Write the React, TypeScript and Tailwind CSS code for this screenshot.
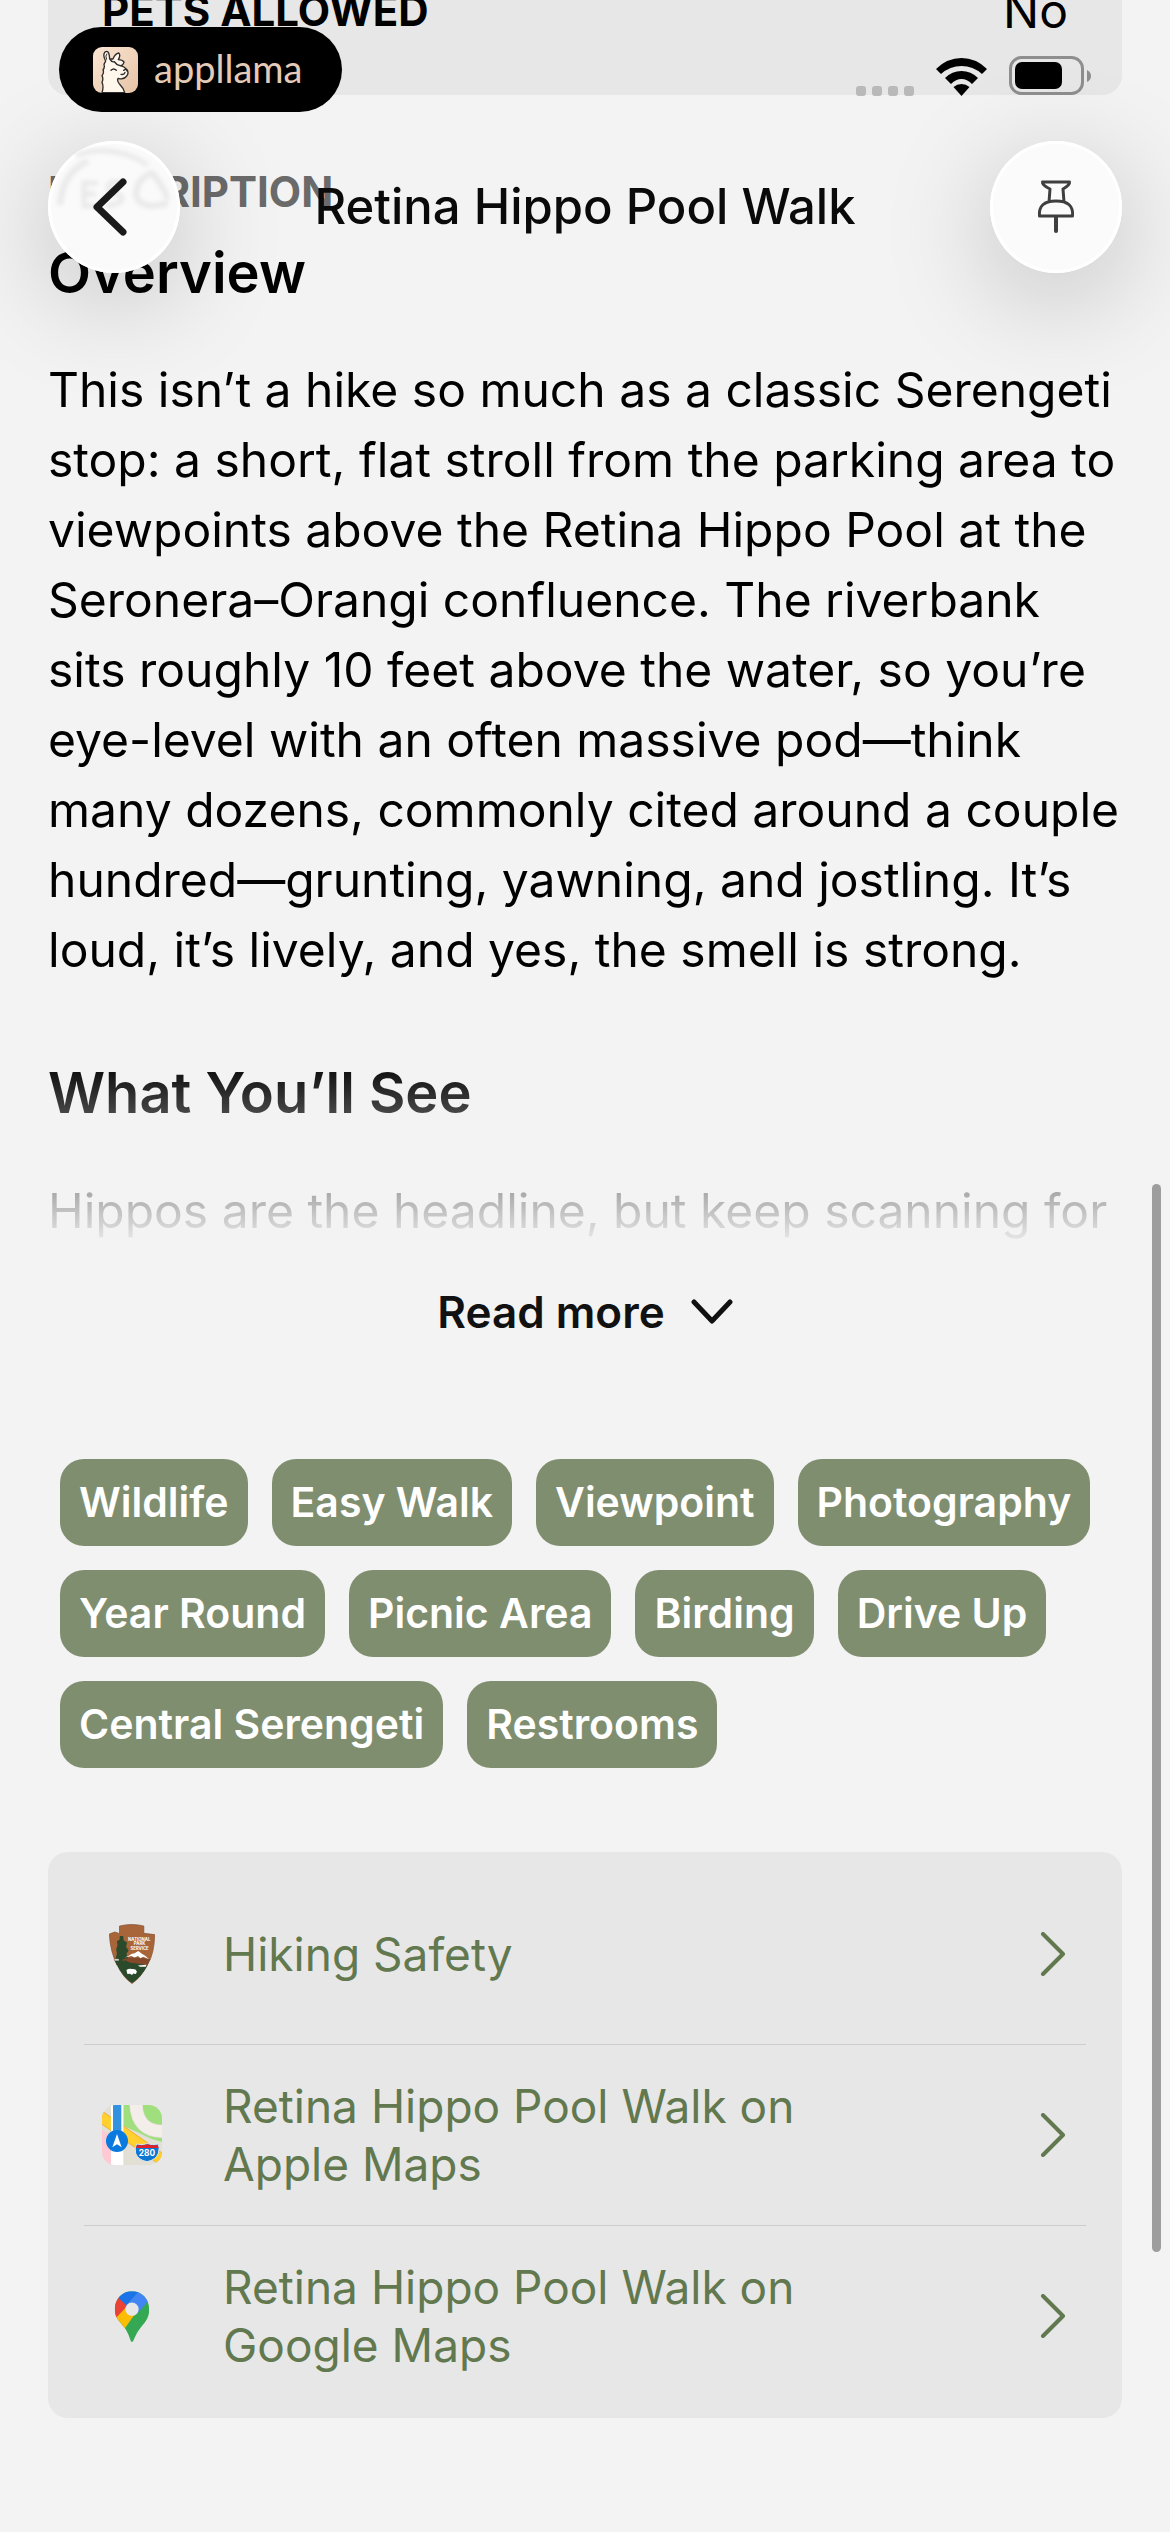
import React from "react";

const tags = [
  "Wildlife",
  "Easy Walk",
  "Viewpoint",
  "Photography",
  "Year Round",
  "Picnic Area",
  "Birding",
  "Drive Up",
  "Central Serengeti",
  "Restrooms",
];

function ParkServiceIcon() {
  return (
    <svg viewBox="86 100 140 182" className="h-[60px] w-[46px]" aria-hidden="true">
      <path
        d="M118 106 Q155 96 192 106 L192 128 L225 132 Q224 190 204 222 Q184 262 156 281 Q128 262 110 222 Q90 185 87 130 L104 124 L118 129Z"
        fill="#a9653a"
        stroke="#7d4a2a"
        strokeWidth="2"
      />
      <path d="M100 206 Q150 198 212 206 L203 226 L110 226Z" fill="#84492a" />
      <path d="M104 208 L124 203 L120 216 L136 210 L150 218 L172 220 L203 226 Q184 262 156 279 Q128 262 108 220Z" fill="#2b4a2b" />
      <path d="M119 136 L129 136 L131 150 L141 156 L138 170 L146 180 L139 190 L144 204 L128 206 L126 222 L119 222 L119 206 L106 204 L110 190 L108 176 L112 164 L110 152 L118 148Z" fill="#2b4a2b" />
      <path d="M134 202 L146 196 L156 190 L164 189 L175 182 L186 190 L196 196 L208 207 L190 199 L182 204 L174 197 L164 202 L154 197Z" fill="#fff" />
      <path d="M102 207 H116 V211 H104Z M174 226 L200 224 L198 230 H180Z" fill="#fff" />
      <path d="M139 240 Q148 233 156 237 Q168 236 171 244 L168 252 L160 250 L156 255 L150 251 L142 252Z" fill="#fff" />
      <g fill="#fff" fontFamily="Inter, sans-serif" fontWeight="700" fontSize="13" textAnchor="middle">
        <text x="178" y="151">NATIONAL</text>
        <text x="179" y="165">PARK</text>
        <text x="179" y="178">SERVICE</text>
      </g>
    </svg>
  );
}

function AppleMapsIcon() {
  return (
    <svg viewBox="66 75 180 180" className="h-[60px] w-[60px]" aria-hidden="true">
      <clipPath id="maps-tile">
        <rect x="66" y="75" width="180" height="180" rx="40" />
      </clipPath>
      <g clipPath="url(#maps-tile)">
        <rect x="66" y="75" width="180" height="180" fill="#e2dfd5" />
        <path d="M130 75H246V185Q215 180 180 160L130 138Z" fill="#9fdf7d" />
        <path d="M168 70Q170 154 250 154" fill="none" stroke="#e2ddd8" strokeWidth="40" />
        <path d="M168 70Q170 154 250 154" fill="none" stroke="#f4eeea" strokeWidth="36" />
        <path d="M66 150L100 170V255H66Z" fill="#ffc9d4" />
        <path d="M56 106L256 246" fill="none" stroke="#f2ae2c" strokeWidth="35" />
        <path d="M56 106L256 246" fill="none" stroke="#ffd02f" strokeWidth="30" />
        <rect x="93" y="75" width="37" height="180" fill="#fff" />
        <rect x="99" y="75" width="25" height="90" fill="#3392e0" />
        <circle cx="111" cy="183" r="33" fill="#0a7adf" />
        <path d="M111 162L125 202L111 193L97 202Z" fill="#fff" />
        <path d="M170 192Q186 196 202 191Q218 196 234 192Q240 204 235 220Q228 240 201 245Q174 240 167 220Q163 204 170 192Z" fill="#0d77d2" stroke="#d9e6ee" strokeWidth="3" />
        <path d="M171 194Q186 198 202 193Q218 198 233 194L236 204H168Z" fill="#e0202b" />
        <text x="201" y="228" fill="#fff" fontFamily="Inter, sans-serif" fontWeight="700" fontSize="25" textAnchor="middle">280</text>
      </g>
    </svg>
  );
}

function GoogleMapsIcon() {
  return (
    <svg viewBox="104 92 108 154" className="h-[51px] w-9" aria-hidden="true">
      <clipPath id="pin-shape">
        <path d="M158 93C187 93 210 116 210 147C210 178 194 189 180 208C168 225 166 235 161 244Q158 248 155 244C150 232 148 222 138 206C122 184 106 175 106 147C106 116 129 93 158 93Z" />
      </clipPath>
      <g clipPath="url(#pin-shape)">
        <rect x="100" y="90" width="116" height="160" fill="#34a853" />
        <path d="M100 180L158 112L182 140L134 208L100 220Z" fill="#fbbc04" />
        <path d="M100 95L118 112L146 135L110 173H96Z" fill="#ea4335" />
        <path d="M117 113L142 136L182 90H130Z" fill="#1a73e8" />
        <path d="M176 95L142 136L172 162L207 122L200 90Z" fill="#4285f4" />
      </g>
      <circle cx="158" cy="147" r="20" fill="#e7e7e7" />
    </svg>
  );
}

function LlamaIcon() {
  return (
    <svg viewBox="0 0 135 138" className="h-[46px] w-[45px]" aria-hidden="true">
      <defs>
        <linearGradient id="llama-bg" x1="0" y1="0" x2="1" y2="1">
          <stop offset="0" stopColor="#fbe6d3" />
          <stop offset="1" stopColor="#e6c3a6" />
        </linearGradient>
      </defs>
      <rect width="135" height="138" rx="27" fill="url(#llama-bg)" />
      <path
        d="M27 137Q33 118 27 106Q32 96 27 86Q34 78 30 68Q36 62 33 52Q36 46 38 42Q28 24 36 15Q46 8 49 26L50 36L60 36Q66 20 77 18Q84 24 76 38Q88 38 93 45Q90 56 82 56Q94 58 102 68Q108 78 102 86Q92 100 76 94Q70 100 80 112Q92 124 95 137Z"
        fill="#fff6ec"
        stroke="#2b2b2b"
        strokeWidth="4"
        strokeLinejoin="round"
      />
      <path d="M52 38Q56 46 64 44Q70 54 82 56M54 70Q62 62 70 70M92 70L98 66L102 72M96 76Q94 84 84 82" fill="none" stroke="#2b2b2b" strokeWidth="4" strokeLinecap="round" />
      <path d="M41 38Q36 26 42 20" fill="none" stroke="#2b2b2b" strokeWidth="3" />
    </svg>
  );
}

function StatusIcons() {
  return (
    <div className="flex items-end" aria-label="Status">
      <div className="flex gap-1.5">
        {[0, 1, 2, 3].map((i) => (
          <span key={i} className="size-2.5 rounded-[3px] bg-[#b9b9b9]" />
        ))}
      </div>
      <svg viewBox="0 0 51 38" className="ml-[22px] h-[38px] w-[51px]" aria-hidden="true">
        <path d="M0 11Q11 0 25.500 0Q40 0 51 11L46 16Q37 8 25.500 8Q14 8 5 16Z" />
        <path d="M9 20Q16 13 25.500 13Q35 13 42 20L36 26Q31 21 25.500 21Q20 21 15 26Z" />
        <path d="M17.500 29Q21 26 25.500 26Q30 26 33.500 29L25.500 38Z" />
      </svg>
      <svg viewBox="0 0 83 40" className="ml-[22px] h-10 w-[83px]" aria-hidden="true">
        <rect x="1.500" y="1.500" width="72" height="36" rx="11" fill="none" stroke="#8e8e8e" strokeWidth="3" />
        <rect x="6" y="6" width="47" height="27" rx="7" />
        <path d="M78 14Q82 16 82 20Q82 24 78 26Z" fill="#8e8e8e" />
      </svg>
    </div>
  );
}

/* Refraction of the label behind the round glass button. */
function BackGlass() {
  return (
    <svg viewBox="0 0 132 132" className="absolute inset-0 size-full rounded-full" aria-hidden="true">
      <defs>
        <filter id="glass-soft">
          <feGaussianBlur stdDeviation="2" />
        </filter>
      </defs>
      <g filter="url(#glass-soft)" fill="none" stroke="#e9e9e9">
        <path d="M28 14Q66 2 100 24" strokeWidth="5" />
        <path d="M12 64Q14 32 40 20" strokeWidth="6" />
        <path d="M50 42H36V65H52M36 53H48" strokeWidth="5" />
        <path d="M76 42Q60 38 60 47Q62 53 72 54Q80 62 58 65" strokeWidth="5" />
        <path d="M120 62Q92 70 88 54Q88 38 104 32Q112 40 120 58" strokeWidth="6" />
      </g>
    </svg>
  );
}

function LinkRow({ icon, label }: { icon: React.ReactNode; label: string }) {
  return (
    <li>
      <a href="#" className="flex h-[180px] items-center">
        <span className="flex w-24 shrink-0 justify-center">{icon}</span>
        <span className="ml-[43px] max-w-[640px] text-[46px] leading-[58px] text-[#62784e]">{label}</span>
        <svg viewBox="0 0 26 44" className="mr-5 ml-auto h-11 w-[26px]" fill="none" stroke="#62784e" strokeWidth="4" strokeLinecap="round" strokeLinejoin="round" aria-hidden="true">
          <path d="M3 2L23 22L3 42" />
        </svg>
      </a>
    </li>
  );
}

export default function App() {
  return (
    <div className="relative flex min-h-screen flex-col overflow-hidden bg-[#f3f3f3] font-['Inter',sans-serif] text-black">
      <main className="flex flex-col px-12">
        <dl className="-mt-5 flex justify-between rounded-b-[20px] bg-[#e7e7e7] pr-[54px] pb-[53px] pl-[54px] leading-[62px]">
          <dt className="text-[42px] font-bold">PETS ALLOWED</dt>
          <dd className="text-[48px]">No</dd>
        </dl>

        <h3 className="mt-[73px] text-[42px] leading-[48px] font-bold text-[#6a6a6a]">DESCRIPTION</h3>

        <section className="mt-[21px] pb-1 [mask-image:linear-gradient(to_top,transparent,black_192px)]">
          <h2 className="text-[56px] leading-[72px] font-semibold">Overview</h2>
          <p className="mt-[46px] text-[48px] leading-[70px]">
            This isn’t a hike so much as a classic Serengeti stop: a short, flat stroll from the parking area to
            viewpoints above the Retina Hippo Pool at the Seronera–Orangi confluence. The riverbank sits roughly 10
            feet above the water, so you’re eye-level with an often massive pod—think many dozens, commonly cited
            around a couple hundred—grunting, yawning, and jostling. It’s loud, it’s lively, and yes, the smell is
            strong.
          </p>
          <h2 className="mt-[72px] text-[56px] leading-[72px] font-semibold">What You’ll See</h2>
          <p className="mt-[47px] text-[48px] leading-[70px] whitespace-nowrap">
            Hippos are the headline, but keep scanning for
          </p>
        </section>

        <button type="button" className="mt-8 flex items-center gap-[26px] self-center text-[44px] leading-[60px] font-semibold text-[#111]">
          Read more
          <svg viewBox="0 0 42 26" className="h-[26px] w-[42px]" fill="none" stroke="currentColor" strokeWidth="5" strokeLinecap="round" strokeLinejoin="round" aria-hidden="true">
            <path d="M3 3L21 22L39 3" />
          </svg>
        </button>

        <ul className="mt-[117px] flex flex-wrap gap-6 px-3">
          {tags.map((tag) => (
            <li key={tag} className="rounded-3xl bg-[#808e70] px-[19px] text-[41px] leading-[87px] font-semibold text-white">
              {tag}
            </li>
          ))}
        </ul>

        <ul className="mt-[84px] divide-y divide-[#cdcdcd] rounded-[20px] bg-[#e7e7e7] px-9 py-3">
          <LinkRow icon={<ParkServiceIcon />} label="Hiking Safety" />
          <LinkRow icon={<AppleMapsIcon />} label="Retina Hippo Pool Walk on Apple Maps" />
          <LinkRow icon={<GoogleMapsIcon />} label="Retina Hippo Pool Walk on Google Maps" />
        </ul>
      </main>

      <div className="absolute top-[1184px] right-[9px] h-[1068px] w-[9px] rounded-full bg-[#9d9d9d]" />

      <header className="absolute inset-x-0 top-0">
        <div className="flex items-end justify-between pt-[27px] pr-[78px] pl-[59px]">
          <div className="relative z-10 flex h-[85px] w-[283px] items-center rounded-full bg-black pl-[34px]">
            <LlamaIcon />
            <span className="ml-4 pb-1 font-['Lato',sans-serif] text-[38px] leading-none text-[#e3cbb7]">appllama</span>
          </div>
          <div className="pb-4">
            <StatusIcons />
          </div>
        </div>
        <div className="mt-[29px] flex items-center justify-between px-12">
          <button type="button" aria-label="Back" className="relative flex size-[132px] items-center justify-center rounded-full bg-[#fafafa] shadow-[0_24px_110px_rgba(0,0,0,0.22)] ring-3 ring-white ring-inset">
            <BackGlass />
            <svg viewBox="0 0 34 58" className="relative mr-2 h-[58px] w-[34px]" fill="none" stroke="#1a1a1a" strokeWidth="7" strokeLinecap="round" strokeLinejoin="round" aria-hidden="true">
              <path d="M30 4L4 29L30 54" />
            </svg>
          </button>
          <h1 className="text-[49px] leading-[60px] font-medium text-[#0a0a0a]">Retina Hippo Pool Walk</h1>
          <button type="button" aria-label="Pin" className="flex size-[132px] items-center justify-center rounded-full bg-[#fbfbfb] shadow-[0_24px_110px_rgba(0,0,0,0.22)] ring-3 ring-white ring-inset">
            <svg viewBox="0 0 40 56" className="h-14 w-10" fill="none" stroke="#3f3f3f" strokeWidth="3" strokeLinecap="round" strokeLinejoin="round" aria-hidden="true">
              <path d="M6.500 3H33.500Q34 6 27 10L28 23M13 23L14 10Q6 6 6.500 3M3.500 37Q2 22 20 22Q38 22 36.500 37Z" />
              <path d="M20 38V52" strokeWidth="4" />
            </svg>
          </button>
        </div>
      </header>
    </div>
  );
}
